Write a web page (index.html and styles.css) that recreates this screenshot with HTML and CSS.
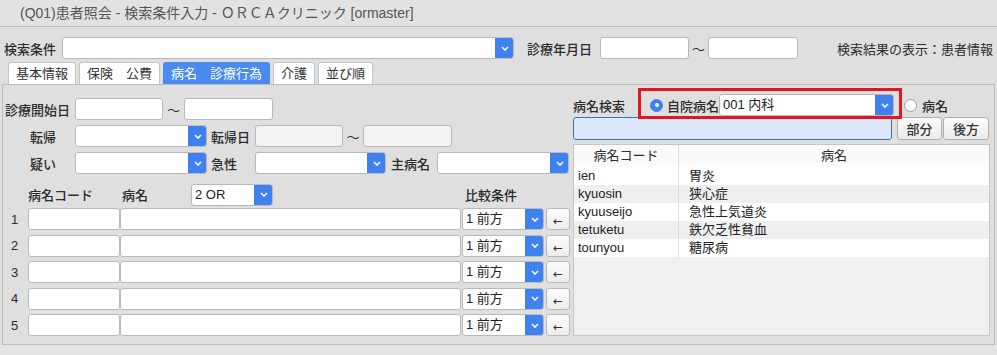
FILE: index.html
```html
<!DOCTYPE html>
<html lang="ja">
<head>
    <meta charset="UTF-8">
    <title>(Q01)患者照会 - 検索条件入力</title>
    <link rel="stylesheet" href="styles.css">
</head>
<body>
    <div class="titlebar">(Q01)患者照会 - 検索条件入力 - ＯＲＣＡクリニック [ormaster]</div>

    <!-- search conditions -->
    <div class="toolbar">
        <span class="lbl w58">検索条件</span>
        <div class="combo w452"><span class="combo-text"></span><span class="combo-btn"><svg width="8" height="5" viewBox="0 0 8 5"><polyline points="1,1 4,4 7,1" fill="none" stroke="#fff" stroke-width="1.6"/></svg></span></div>
        <span class="lbl ml13 w73">診療年月日</span>
        <input type="text" class="field w89">
        <span class="tilde w19">〜</span>
        <input type="text" class="field w90">
        <span class="result">検索結果の表示：患者情報</span>
    </div>

    <div class="tabs">
        <span class="tab">基本情報</span>
        <span class="tab">保険　公費</span>
        <span class="tab active">病名　診療行為</span>
        <span class="tab">介護</span>
        <span class="tab">並び順</span>
    </div>

    <div class="panel">
        <div class="left">
            <div class="row first">
                <span class="lbl w70">診療開始日</span>
                <input type="text" class="field w88">
                <span class="tilde w21">〜</span>
                <input type="text" class="field w89">
            </div>
            <div class="row">
                <span class="lbl w70 sub">転帰</span>
                <div class="combo w132"><span class="combo-text"></span><span class="combo-btn"><svg width="8" height="5" viewBox="0 0 8 5"><polyline points="1,1 4,4 7,1" fill="none" stroke="#fff" stroke-width="1.6"/></svg></span></div>
                <span class="lbl ml4 w44">転帰日</span>
                <input type="text" class="field w88 disabled" disabled>
                <span class="tilde w20">〜</span>
                <input type="text" class="field w89 disabled" disabled>
            </div>
            <div class="row">
                <span class="lbl w70 sub">疑い</span>
                <div class="combo w132"><span class="combo-text"></span><span class="combo-btn"><svg width="8" height="5" viewBox="0 0 8 5"><polyline points="1,1 4,4 7,1" fill="none" stroke="#fff" stroke-width="1.6"/></svg></span></div>
                <span class="lbl ml4 w44">急性</span>
                <div class="combo w131"><span class="combo-text"></span><span class="combo-btn"><svg width="8" height="5" viewBox="0 0 8 5"><polyline points="1,1 4,4 7,1" fill="none" stroke="#fff" stroke-width="1.6"/></svg></span></div>
                <span class="lbl ml5 w46">主病名</span>
                <div class="combo w132"><span class="combo-text"></span><span class="combo-btn"><svg width="8" height="5" viewBox="0 0 8 5"><polyline points="1,1 4,4 7,1" fill="none" stroke="#fff" stroke-width="1.6"/></svg></span></div>
            </div>

            <div class="row head">
                <span class="num"></span>
                <span class="lbl w94">病名コード</span>
                <span class="lbl w69">病名</span>
                <div class="combo w82"><span class="combo-text">2 OR</span><span class="combo-btn"><svg width="8" height="5" viewBox="0 0 8 5"><polyline points="1,1 4,4 7,1" fill="none" stroke="#fff" stroke-width="1.6"/></svg></span></div>
                <span class="lbl ml192">比較条件</span>
            </div>

            <div class="list" id="byomeiRows"></div>
        </div>

        <div class="right">
            <div class="rrow">
                <span class="lbl w77">病名検索</span>
                <span class="marked">
                    <span class="radio on"></span>
                    <span class="lbl ml4">自院病名</span>
                    <div class="combo w175"><span class="combo-text">001 内科</span><span class="combo-btn"><svg width="8" height="5" viewBox="0 0 8 5"><polyline points="1,1 4,4 7,1" fill="none" stroke="#fff" stroke-width="1.6"/></svg></span></div>
                </span>
                <span class="radio ml10"></span>
                <span class="lbl ml5">病名</span>
            </div>
            <div class="rrow search">
                <input type="text" class="field focus w319">
                <button class="btn ml5 w45">部分</button>
                <button class="btn ml1 w46">後方</button>
            </div>
            <div class="grid">
                <div class="grid-head">
                    <span class="c1">病名コード</span>
                    <span class="c2">病名</span>
                </div>
                <div id="gridBody"></div>
            </div>
        </div>
    </div>
    <div class="statusbar"></div>

    <script>
        const chevron = '<svg width="8" height="5" viewBox="0 0 8 5"><polyline points="1,1 4,4 7,1" fill="none" stroke="#fff" stroke-width="1.6"/></svg>';

        const rowsOut = document.getElementById('byomeiRows');
        for (let i = 1; i <= 5; i++) {
            const row = document.createElement('div');
            row.className = 'row item';
            row.innerHTML = `
                <span class="num">${i}</span>
                <input type="text" class="field w92">
                <input type="text" class="field ml2 w341">
                <div class="combo ml1 w82"><span class="combo-text">1 前方</span><span class="combo-btn">${chevron}</span></div>
                <button class="arrow ml2">←</button>
            `;
            rowsOut.appendChild(row);
        }

        const byomei = [
            ['ien', '胃炎'],
            ['kyuosin', '狭心症'],
            ['kyuuseijo', '急性上気道炎'],
            ['tetuketu', '鉄欠乏性貧血'],
            ['tounyou', '糖尿病']
        ];
        const gridOut = document.getElementById('gridBody');
        byomei.forEach(([code, name]) => {
            const line = document.createElement('div');
            line.className = 'grid-row';
            line.innerHTML = `<span class="c1">${code}</span><span class="c2">${name}</span>`;
            gridOut.appendChild(line);
        });
    </script>
</body>
</html>
```

FILE: styles.css
```css
body {
    margin: 0;
    background: #dfdfdf;
    font-family: "Liberation Sans", "Noto Sans CJK JP", sans-serif;
    font-size: 13px;
    color: #2b2b2b;
    width: 997px;
    height: 355px;
    overflow: hidden;
}

.titlebar {
    height: 26px;
    line-height: 26px;
    padding-left: 20px;
    font-size: 14px;
    color: #555;
    background: #e2e2e2;
    border-bottom: 1px solid #bdbdbd;
}

.toolbar {
    display: flex;
    align-items: center;
    height: 22px;
    margin-top: 10px;
    padding-left: 4px;
}

.result {
    margin-left: auto;
    margin-right: 4px;
}

.lbl {
    display: inline-block;
    white-space: nowrap;
    flex: none;
    font-weight: 500;
}

.sub {
    padding-left: 25px;
    box-sizing: border-box;
}

.tilde {
    display: inline-block;
    text-align: center;
    flex: none;
}

/* widths and margins */
.w19 { width: 19px; }
.w20 { width: 20px; }
.w21 { width: 21px; }
.w44 { width: 44px; }
.w45 { width: 45px; }
.w46 { width: 46px; }
.w58 { width: 58px; }
.w69 { width: 69px; }
.w70 { width: 70px; }
.w73 { width: 73px; }
.w77 { width: 77px; }
.w82 { width: 82px; }
.w88 { width: 88px; }
.w89 { width: 89px; }
.w90 { width: 90px; }
.w92 { width: 92px; }
.w94 { width: 94px; }
.w131 { width: 131px; }
.w132 { width: 132px; }
.w175 { width: 175px; }
.w319 { width: 319px; }
.w341 { width: 341px; }
.w452 { width: 452px; }
.ml1 { margin-left: 1px; }
.ml2 { margin-left: 2px; }
.ml4 { margin-left: 4px; }
.ml5 { margin-left: 5px; }
.ml10 { margin-left: 10px; }
.ml13 { margin-left: 13px; }
.ml192 { margin-left: 192px; }

.field {
    flex: none;
    box-sizing: border-box;
    height: 22px;
    margin: 0;
    background: #fff;
    border: 1px solid #b9b9b9;
    border-radius: 3px;
    outline: none;
    font: inherit;
}

.field.disabled {
    background: #f2f2f2;
}

.field.focus {
    height: 23px;
    background: #dde9fa;
    border: 1px solid #3a6fd0;
}

.combo {
    flex: none;
    display: flex;
    box-sizing: border-box;
    height: 22px;
    background: #fff;
    border: 1px solid #b9b9b9;
    border-radius: 3px;
    overflow: hidden;
}

.combo-text {
    flex: 1;
    padding-left: 3px;
    line-height: 20px;
    font-size: 13px;
    color: #222;
    white-space: nowrap;
}

.combo-btn {
    width: 19px;
    display: flex;
    align-items: center;
    justify-content: center;
    background: #3f82ef;
    margin: -1px -1px -1px 0;
}

.tabs {
    display: flex;
    gap: 3px;
    margin-top: 3px;
    padding-left: 8px;
    height: 22px;
}

.tab {
    box-sizing: border-box;
    height: 22px;
    line-height: 21px;
    padding: 0 7px;
    background: #fff;
    border: 1px solid #c4c4c4;
    border-bottom: none;
    border-radius: 3px 3px 0 0;
    color: #333;
}

.tab.active {
    background: #4a8af1;
    border-color: #4a8af1;
    color: #fff;
}

.panel {
    display: flex;
    margin: 0 2px;
    background: #dfdfdf;
    border: 1px solid #bdbdbd;
    box-sizing: border-box;
    height: 261px;
}

.left {
    width: 570px;
    padding: 13px 0 0 2px;
    box-sizing: border-box;
    display: flex;
    flex-direction: column;
    gap: 5px;
}

.row {
    display: flex;
    align-items: center;
    height: 22px;
}

.row.head {
    height: 23px;
    margin-top: 4px;
}

.list {
    display: flex;
    flex-direction: column;
    gap: 4.5px;
    margin-top: -3px;
}

.num {
    width: 23px;
    padding-left: 6px;
    box-sizing: border-box;
    flex: none;
}

.arrow {
    flex: none;
    width: 24px;
    height: 22px;
    padding: 4px 0 0;
    font-family: "DejaVu Sans", sans-serif;
    font-size: 12px;
    line-height: 16px;
    color: #333;
    background: linear-gradient(#fbfbfb, #ececec);
    border: 1px solid #b9b9b9;
    border-radius: 3px;
}

.right {
    width: 417px;
    padding-top: 9px;
    display: flex;
    flex-direction: column;
}

.rrow {
    display: flex;
    align-items: center;
    height: 22px;
}

.rrow.search {
    height: 23px;
    margin-top: 1px;
}

.marked {
    display: flex;
    align-items: center;
    position: relative;
}

.marked::after {
    content: "";
    position: absolute;
    left: -12px;
    right: -8px;
    top: -6px;
    bottom: -3px;
    border: 3px solid #e3161e;
}

.radio {
    flex: none;
    box-sizing: border-box;
    width: 13px;
    height: 13px;
    border-radius: 50%;
    background: #fff;
    border: 1px solid #9a9a9a;
}

.radio.on {
    background: #3f82ef;
    border-color: #3f82ef;
    position: relative;
}

.radio.on::after {
    content: "";
    position: absolute;
    left: 3.5px;
    top: 3.5px;
    width: 4px;
    height: 4px;
    border-radius: 50%;
    background: #fff;
}

.btn {
    flex: none;
    height: 23px;
    padding: 0;
    font: inherit;
    font-weight: 500;
    color: #333;
    background: linear-gradient(#fbfbfb, #ececec);
    border: 1px solid #b0b0b0;
    border-radius: 3px;
}

.grid {
    margin-top: 4px;
    height: 192px;
    box-sizing: border-box;
    background: #f0f0f0;
    border: 1px solid #c6c6c6;
}

.grid-head {
    display: flex;
    height: 22px;
    line-height: 22px;
    background: #fafafa;
    text-align: center;
}

.grid-row {
    display: flex;
    height: 18px;
    line-height: 18px;
    color: #222;
}

.grid-row:nth-child(odd) {
    background: #fff;
}

.grid-row:nth-child(even) {
    background: #efefef;
}

.c1 {
    width: 105px;
    padding-left: 4px;
    box-sizing: border-box;
    border-right: 1px solid #dcdcdc;
}

.c2 {
    flex: 1;
    padding-left: 10px;
}

.grid-head .c1,
.grid-head .c2 {
    padding-left: 0;
}

.statusbar {
    height: 10px;
    background: #e4e4e4;
}
```
